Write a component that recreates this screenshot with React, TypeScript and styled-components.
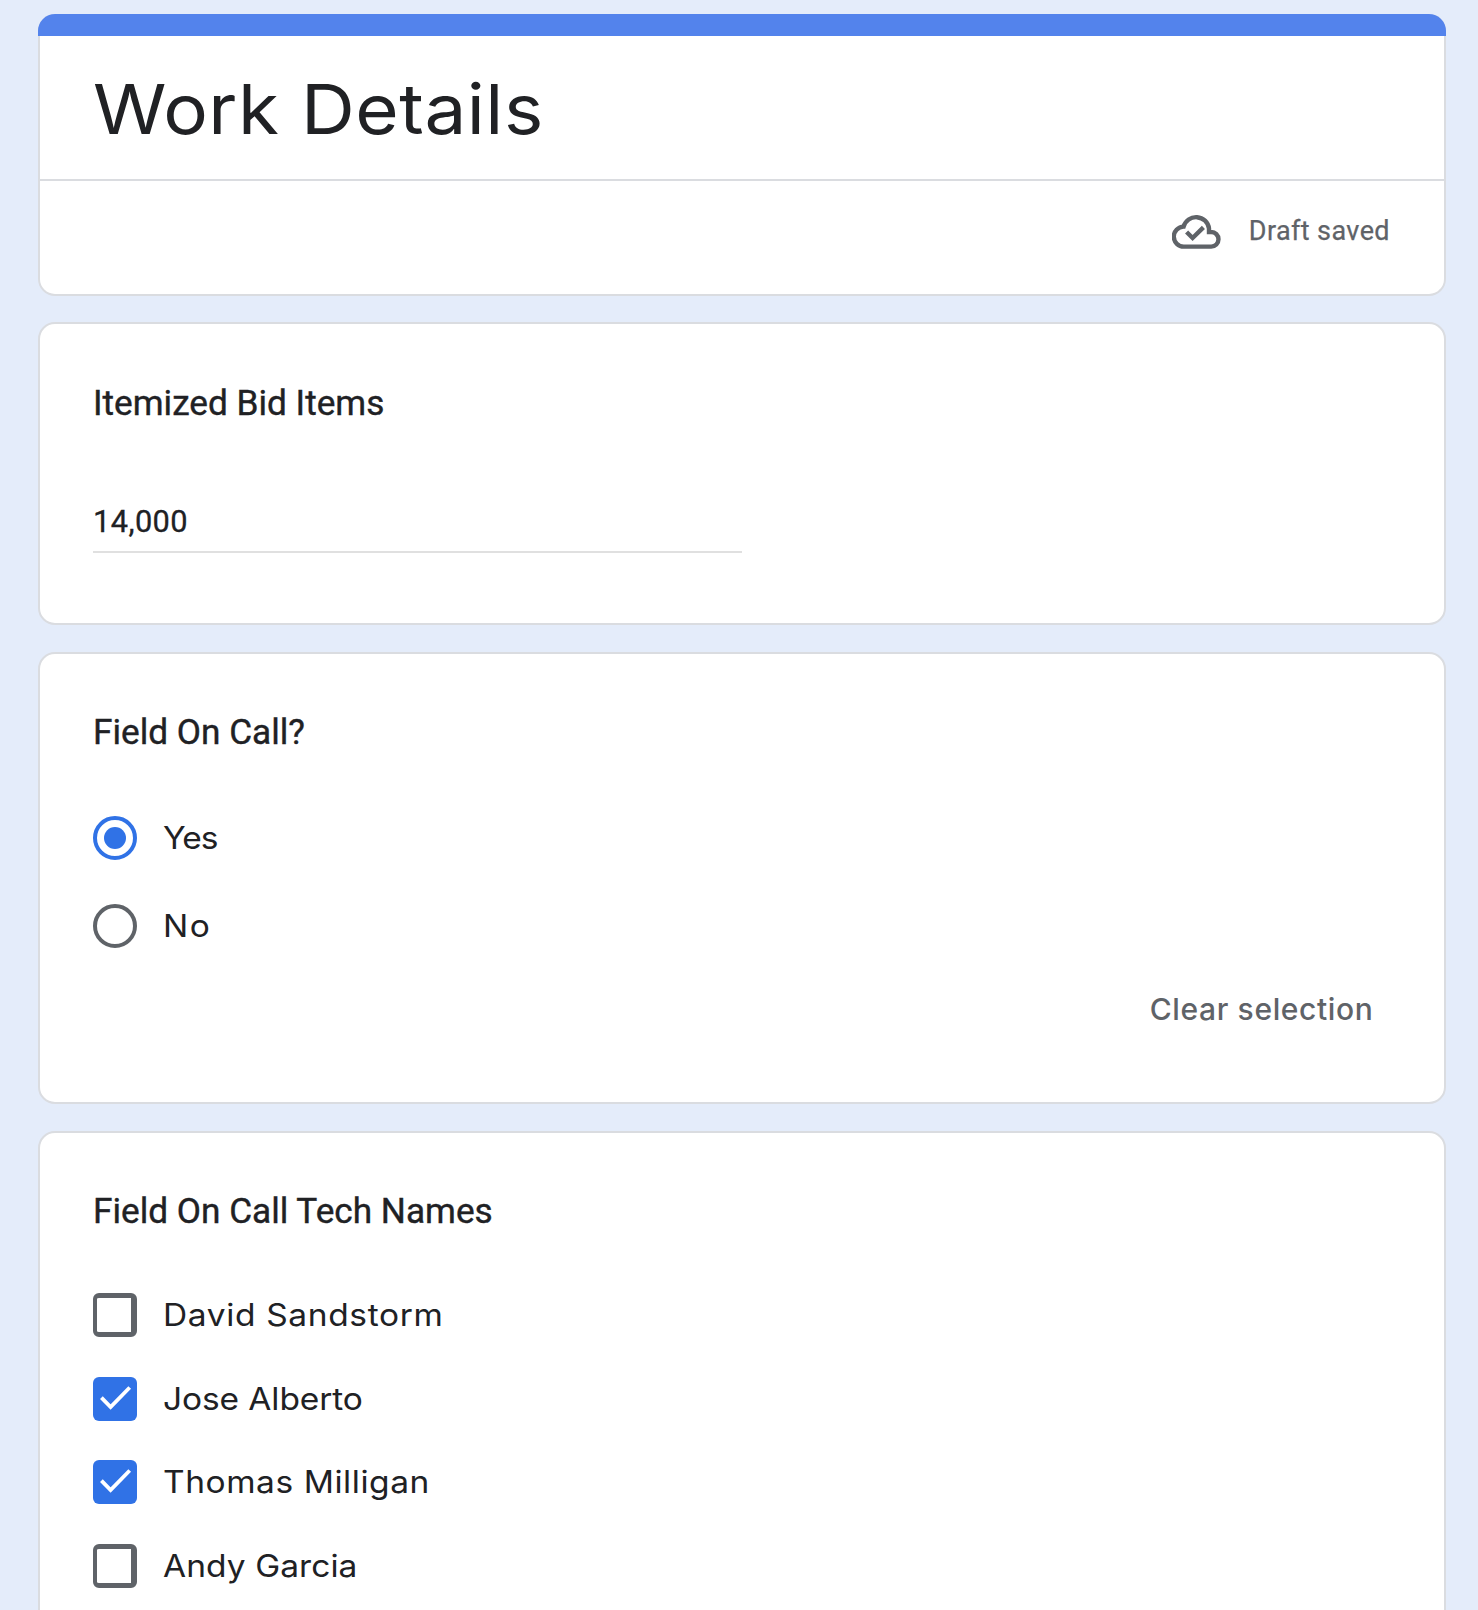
import React, { useState } from 'react';
import styled, { createGlobalStyle, css } from 'styled-components';

const GlobalStyle = createGlobalStyle`
  * {
    box-sizing: border-box;
  }
  body {
    margin: 0;
    background: #e4ecfa;
    color: #202124;
    font-family: Roboto, "Liberation Sans", sans-serif;
  }
`;

const Page = styled.main`
  display: flex;
  flex-direction: column;
  gap: 27px;
  height: 1610px;
  padding: 14px 32px 0 38px;
  overflow: hidden;
`;

const Card = styled.section<{ $height: number; $padTop?: number }>`
  flex: none;
  height: ${(p) => p.$height}px;
  padding: ${(p) => p.$padTop ?? 54}px 53px 0;
  background: #fff;
  border: 2px solid #dadce0;
  border-radius: 17px;
`;

const HeaderCard = styled.header`
  flex: none;
  height: 282px;
  margin-bottom: -1px;
  background: #fff;
  border: 2px solid #dadce0;
  border-top: 0;
  border-radius: 17px;
`;

const AccentBar = styled.div`
  height: 22px;
  margin: 0 -2px;
  background: #5383ec;
  border-radius: 17px 17px 0 0;
`;

const Title = styled.h1`
  height: 145px;
  margin: 0;
  padding: 31px 53px 0;
  border-bottom: 2px solid #dadce0;
  font: 400 69px/84px Inter, sans-serif;
  letter-spacing: 0.47px;

  span {
    display: inline-block;
    transform: scaleX(1.08);
    transform-origin: left;
  }
`;

const SaveStatus = styled.div`
  display: flex;
  align-items: center;
  justify-content: flex-end;
  gap: 28px;
  height: 48px;
  margin: 26px 54px 0;
  color: #5f6368;
  font-size: 27px;
  letter-spacing: 0.4px;
  line-height: 49px;
  -webkit-text-stroke: 0.25px #5f6368;

  span {
    height: 48px;
  }
`;

const Question = styled.h2`
  height: 48px;
  margin: 0;
  font-size: 35.2px;
  font-weight: 400;
  line-height: 48px;
  -webkit-text-stroke: 0.4px #202124;
`;

const ShortAnswer = styled.input`
  display: block;
  width: 649px;
  height: 56px;
  margin-top: 70px;
  padding: 0 0 5px;
  border: 0;
  border-bottom: 2px solid #e0e0e0;
  outline: 0;
  color: #202124;
  background: transparent;
  font: 400 30.8px/49px Roboto, sans-serif;
  letter-spacing: 0.4px;
  -webkit-text-stroke: 0.3px #202124;
`;

const Options = styled.div<{ $gapTop?: number }>`
  margin-top: ${(p) => p.$gapTop ?? 38}px;
`;

const Option = styled.div<{ $height: number }>`
  display: flex;
  align-items: center;
  gap: 25.5px;
  height: ${(p) => p.$height}px;
  cursor: pointer;
`;

const OptionLabel = styled.span<{ $spacing: number }>`
  font: 400 31px/44px Inter, sans-serif;
  letter-spacing: ${(p) => p.$spacing}px;
  transform: scaleX(1.08);
  transform-origin: left;
`;

const Radio = styled.span<{ $checked: boolean }>`
  display: flex;
  align-items: center;
  justify-content: center;
  width: 44px;
  height: 44px;
  border: 4px solid ${(p) => (p.$checked ? '#3072e6' : '#5f6368')};
  border-radius: 50%;

  ${(p) =>
    p.$checked &&
    css`
      &::after {
        content: '';
        width: 22px;
        height: 22px;
        background: #3072e6;
        border-radius: 50%;
      }
    `}
`;

const Checkbox = styled.span<{ $checked: boolean }>`
  width: 44px;
  height: 44px;
  border: solid #5f6368;
  border-width: 5px 6px 5px 4px;
  border-radius: 6px;

  ${(p) =>
    p.$checked &&
    css`
      background: #3072e6;
      border: 0;
    `}

  svg {
    display: block;
  }
`;

const ClearRow = styled.div`
  display: flex;
  align-items: center;
  justify-content: flex-end;
  height: 78px;
  padding-right: 17.5px;
`;

const ClearButton = styled.button`
  padding: 0;
  border: 0;
  background: none;
  color: #5f6368;
  font: 500 30px/44px Inter, sans-serif;
  letter-spacing: 0.63px;
  cursor: pointer;
`;

const CloudDone = () => (
  <svg width="49" height="37" viewBox="0 0 49 37" fill="none" stroke="#5f6368" strokeWidth="4.4">
    <path d="M12 33.6H39.2A7.3 7.3 0 0 0 39.2 19H37V15.5A13 13 0 0 0 11.6 13.6A10 10 0 0 0 12 33.6Z" />
    <path d="M14.6 19L20.6 25L31.4 14.4" />
  </svg>
);

const Tick = () => (
  <svg width="44" height="44" viewBox="0 0 44 44" fill="none" stroke="#fff" strokeWidth="3.8">
    <path d="M8.4 20.6L17.6 30.1L36.7 10.5" />
  </svg>
);

const answers = [
  { name: 'Yes', spacing: -0.9 },
  { name: 'No', spacing: 1.4 },
];

const techs = [
  { name: 'David Sandstorm', spacing: 0.6 },
  { name: 'Jose Alberto', spacing: -0.08 },
  { name: 'Thomas Milligan', spacing: 0.52 },
  { name: 'Andy Garcia', spacing: 0.07 },
];

export default function App() {
  const [bid, setBid] = useState('14,000');
  const [onCall, setOnCall] = useState<string | null>('Yes');
  const [selected, setSelected] = useState(['Jose Alberto', 'Thomas Milligan']);

  const toggle = (name: string) =>
    setSelected((s) => (s.includes(name) ? s.filter((n) => n !== name) : [...s, name]));

  return (
    <>
      <GlobalStyle />
      <Page>
        <HeaderCard>
          <AccentBar />
          <Title>
            <span>Work Details</span>
          </Title>
          <SaveStatus>
            <CloudDone />
            <span>Draft saved</span>
          </SaveStatus>
        </HeaderCard>

        <Card $height={303} $padTop={55}>
          <Question>Itemized Bid Items</Question>
          <ShortAnswer value={bid} onChange={(e) => setBid(e.target.value)} />
        </Card>

        <Card $height={452}>
          <Question>Field On Call?</Question>
          <Options role="radiogroup">
            {answers.map(({ name, spacing }) => (
              <Option key={name} $height={88} onClick={() => setOnCall(name)}>
                <Radio role="radio" aria-checked={onCall === name} $checked={onCall === name} />
                <OptionLabel $spacing={spacing}>{name}</OptionLabel>
              </Option>
            ))}
          </Options>
          <ClearRow>
            <ClearButton onClick={() => setOnCall(null)}>Clear selection</ClearButton>
          </ClearRow>
        </Card>

        <Card $height={560}>
          <Question>Field On Call Tech Names</Question>
          <Options $gapTop={38.15}>
            {techs.map(({ name, spacing }) => {
              const checked = selected.includes(name);
              return (
                <Option key={name} $height={83.67} onClick={() => toggle(name)}>
                  <Checkbox role="checkbox" aria-checked={checked} $checked={checked}>
                    {checked && <Tick />}
                  </Checkbox>
                  <OptionLabel $spacing={spacing}>{name}</OptionLabel>
                </Option>
              );
            })}
          </Options>
        </Card>
      </Page>
    </>
  );
}
